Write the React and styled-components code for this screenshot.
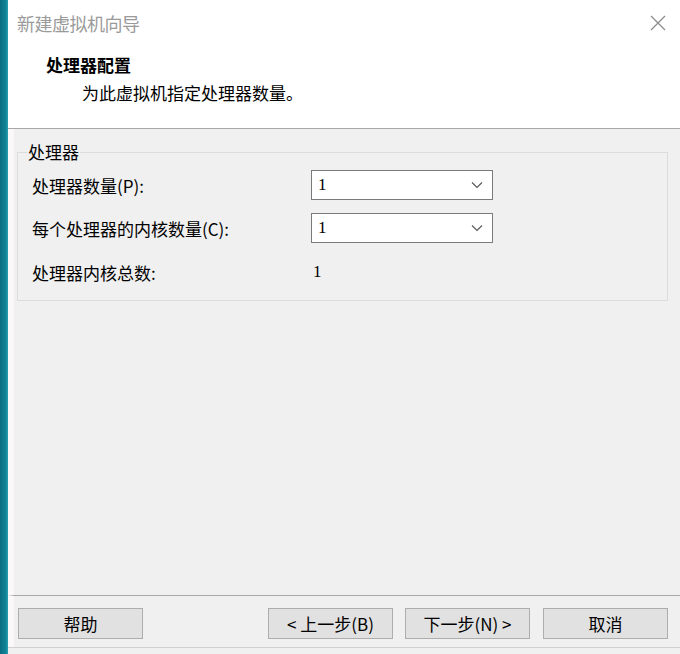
import React from 'react'
import styled, { createGlobalStyle } from 'styled-components'

const GlobalStyle = createGlobalStyle`
    html, body {
        margin: 0;
        padding: 0;
        background: #f0f0f0;
    }
    body {
        font-family: "Noto Sans CJK SC", "Noto Sans", sans-serif;
        color: #000;
    }
`;

const Screen = styled.div`
    display: flex;
    flex-direction: row;
    width: 680px;
    height: 654px;
    overflow: hidden;
`;

const Desktop = styled.div`
    width: 8px;
    flex-shrink: 0;
    background: linear-gradient(to right, #0a6d80 0%, #0f8296 70%, #2a9fb0 100%);
`;

const Dialog = styled.div`
    flex: 1;
    display: flex;
    flex-direction: column;
    background: #ffffff;
`;

const TitleBar = styled.div`
    display: flex;
    align-items: center;
    justify-content: space-between;
    height: 45px;
    padding: 0 14px 0 9px;
    box-sizing: border-box;
`;

const Title = styled.div`
    font-size: 18px;
    color: #9a9a9a;
    letter-spacing: -0.5px;
`;

const Header = styled.div`
    height: 84px;
    padding: 8px 0 0 38px;
    box-sizing: border-box;
    border-bottom: 1px solid #a8a8a8;
`;

const HeaderTitle = styled.div`
    font-size: 17px;
    font-weight: 700;
    line-height: 24px;
`;

const HeaderSub = styled.div`
    font-size: 17px;
    line-height: 32px;
    padding-left: 36px;
`;

const Body = styled.div`
    flex: 1;
    background: #f0f0f0;
    border-left: 6px solid #fbf8fa;
    padding: 13px 12px 0 3px;
`;

const Group = styled.fieldset`
    margin: 0;
    padding: 0 12px 13px 9px;
    border: 1px solid #dcdcdc;
    height: 159px;
    box-sizing: border-box;
`;

const Legend = styled.legend`
    font-size: 17px;
    line-height: 20px;
    padding: 0 1px;
    margin-left: 0;
`;

const Fields = styled.div`
    display: grid;
    grid-template-columns: 279px 182px;
    grid-template-rows: 30px 30px 32px;
    row-gap: 13px;
    margin: 8px 0 0 5px;
    align-items: center;
`;

const Label = styled.div`
    font-size: 17px;
`;

const Select = styled.div`
    display: flex;
    align-items: center;
    justify-content: space-between;
    height: 30px;
    box-sizing: border-box;
    background: #fff;
    border: 1px solid #7a7a7a;
    padding: 0 9px 0 6px;
`;

const Value = styled.span`
    font-family: "Liberation Serif", "DejaVu Serif", serif;
    font-size: 17px;
    padding-left: ${p => p.$indent || 0}px;
`;

const Footer = styled.div`
    display: flex;
    align-items: center;
    height: 52px;
    padding: 4px 12px 0 4px;
    box-sizing: border-box;
    background: #f0f0f0;
    border-top: 1px solid #a8a8a8;
    border-left: 6px solid #fbf8fa;
`;

const Button = styled.div`
    display: flex;
    align-items: center;
    justify-content: center;
    width: 125px;
    height: 31px;
    box-sizing: border-box;
    background: #e1e1e1;
    border: 1px solid #adadad;
    font-size: 17px;
    margin-left: ${p => p.$gap || 0}px;
`;

const Bottom = styled.div`
    height: 7px;
    background: #f0f0f0;
    border-top: 1px solid #d0d0d0;
    box-sizing: border-box;
`;

function Chevron() {
    return (
        <svg width="12" height="8" viewBox="0 0 12 8">
            <path d="M1 1.5 L6 6.5 L11 1.5" fill="none" stroke="#555" strokeWidth="1.1" />
        </svg>
    )
}

function CloseIcon() {
    return (
        <svg width="16" height="16" viewBox="0 0 16 16">
            <path d="M1 1 L15 15 M15 1 L1 15" stroke="#8a8a8a" strokeWidth="1.2" />
        </svg>
    )
}

export default function App() {
    return (
        <Screen>
            <GlobalStyle />
            <Desktop />
            <Dialog>
                <TitleBar>
                    <Title>新建虚拟机向导</Title>
                    <CloseIcon />
                </TitleBar>
                <Header>
                    <HeaderTitle>处理器配置</HeaderTitle>
                    <HeaderSub>为此虚拟机指定处理器数量。</HeaderSub>
                </Header>
                <Body>
                    <Group>
                        <Legend>处理器</Legend>
                        <Fields>
                            <Label>处理器数量(P):</Label>
                            <Select>
                                <Value>1</Value>
                                <Chevron />
                            </Select>
                            <Label>每个处理器的内核数量(C):</Label>
                            <Select>
                                <Value>1</Value>
                                <Chevron />
                            </Select>
                            <Label>处理器内核总数:</Label>
                            <Value $indent={2}>1</Value>
                        </Fields>
                    </Group>
                </Body>
                <Footer>
                    <Button>帮助</Button>
                    <Button $gap={125}>&lt; 上一步(B)</Button>
                    <Button $gap={12}>下一步(N) &gt;</Button>
                    <Button $gap={13}>取消</Button>
                </Footer>
                <Bottom />
            </Dialog>
        </Screen>
    )
}
